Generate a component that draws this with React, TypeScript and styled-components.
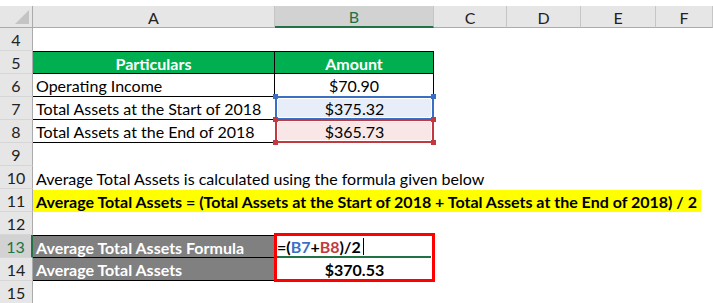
import React from 'react'
import styled, { createGlobalStyle } from 'styled-components'

const GREEN = '#217346'

const GlobalStyle = createGlobalStyle`
  html, body {
    margin: 0;
    padding: 0;
    background: #fff;
  }
  body {
    font-family: Lato, 'Open Sans', sans-serif;
  }
`

const Sheet = styled.div`
  display: grid;
  grid-template-columns: 33px 242px 159px 73px 74px 75px 1fr;
  grid-template-rows: 28px repeat(12, 23px);
  width: 713px;
  height: 303px;
  overflow: hidden;
  background: #fff;
  font-size: 16px;
  color: #000;
`

const Corner = styled.div`
  position: relative;
  margin-top: 6px;
  background: #e6e6e6;
  border-right: 1px solid #ababab;
  border-bottom: 1px solid #ababab;
  box-sizing: border-box;

  &::after {
    content: '';
    position: absolute;
    right: 3px;
    bottom: 3px;
    border-left: 14px solid transparent;
    border-bottom: 14px solid #c4c4c4;
  }
`

const ColHead = styled.div<{ $active?: boolean }>`
  margin-top: 6px;
  display: flex;
  align-items: center;
  justify-content: center;
  box-sizing: border-box;
  background: ${({ $active }) => ($active ? '#d2d2d2' : '#e6e6e6')};
  color: ${({ $active }) => ($active ? GREEN : '#222')};
  border-right: 1px solid #c6c6c6;
  border-bottom: ${({ $active }) => ($active ? `2px solid ${GREEN}` : '1px solid #ababab')};
  padding-top: 1px;
`

const RowHead = styled.div<{ $active?: boolean }>`
  display: flex;
  align-items: center;
  justify-content: center;
  box-sizing: border-box;
  background: ${({ $active }) => ($active ? '#d2d2d2' : '#e6e6e6')};
  color: ${({ $active }) => ($active ? GREEN : '#222')};
  border-bottom: 1px solid #d6d6d6;
  border-right: ${({ $active }) => ($active ? `2px solid ${GREEN}` : '1px solid #ababab')};
`

const Cell = styled.div<{
  $span?: number
  $fill?: string
  $ink?: string
  $bold?: boolean
  $center?: boolean
  $top?: boolean
  $bottom?: boolean
  $right?: boolean
}>`
  grid-column: span ${({ $span }) => $span ?? 1};
  display: flex;
  align-items: center;
  justify-content: ${({ $center }) => ($center ? 'center' : 'flex-start')};
  box-sizing: border-box;
  padding: 1px 3px 0;
  white-space: nowrap;
  background: ${({ $fill }) => $fill ?? 'transparent'};
  color: ${({ $ink }) => $ink ?? '#000'};
  font-weight: ${({ $bold }) => ($bold ? 700 : 400)};
  border-top: ${({ $top }) => ($top ? '1px solid #000' : '0')};
  border-bottom: ${({ $bottom }) => ($bottom ? '1px solid #000' : '0')};
  border-right: ${({ $right }) => ($right ? '1px solid #000' : '0')};
`

const TONES = {
  blue: { line: '#3b6fc4', fill: '#e7eef9' },
  red: { line: '#c23a40', fill: '#f9e7e7' },
}

const RefCell = styled.div<{ $tone: 'blue' | 'red' }>`
  position: relative;
  display: flex;
  align-items: center;
  justify-content: center;
  box-sizing: border-box;
  margin-top: -1px;
  padding-top: 1px;
  border: 2px solid ${({ $tone }) => TONES[$tone].line};
  box-shadow: inset 0 0 0 1px #fff;
  background: ${({ $tone }) => TONES[$tone].fill};
`

const Handle = styled.span<{ $tone: 'blue' | 'red'; $x: 'left' | 'right'; $y: 'top' | 'bottom' }>`
  position: absolute;
  width: 5px;
  height: 5px;
  background: ${({ $tone }) => TONES[$tone].line};
  ${({ $x }) => $x}: -4px;
  ${({ $y }) => $y}: -4px;
  z-index: 2;
`

const Highlight = styled.span`
  flex-shrink: 0;
  display: inline-block;
  margin-left: -3px;
  padding: 1px 4px 0 3px;
  line-height: 21px;
  background: #ffff00;
  font-weight: 700;
`

const Callout = styled.div`
  grid-column: 3;
  grid-row: span 2;
  margin: -2px -1px -1px -1px;
  display: grid;
  grid-template-rows: 1fr 1fr;
  border: 3px solid #ff0000;
  position: relative;
  z-index: 1;
  background: #fff;
  font-weight: 700;
`

const FormulaCell = styled.div`
  display: flex;
  align-items: center;
  box-sizing: border-box;
  padding-top: 1px;
  border-bottom: 2px solid ${GREEN};
  margin-right: 1px;
`

const Ref = styled.span<{ $tone: 'blue' | 'red' }>`
  color: ${({ $tone }) => TONES[$tone].line};
`

const Caret = styled.span`
  display: inline-block;
  width: 1px;
  height: 17px;
  margin-left: 2px;
  background: #000;
`

const ValueCell = styled.div`
  display: flex;
  align-items: center;
  justify-content: center;
  padding-top: 1px;
`

const columns = ['A', 'B', 'C', 'D', 'E', 'F']

function Range({ tone, children }: { tone: 'blue' | 'red'; children: React.ReactNode }) {
  return (
    <RefCell $tone={tone}>
      <Handle $tone={tone} $x="left" $y="top" />
      <Handle $tone={tone} $x="right" $y="top" />
      <Handle $tone={tone} $x="left" $y="bottom" />
      <Handle $tone={tone} $x="right" $y="bottom" />
      {children}
    </RefCell>
  )
}

export default function App() {
  return (
    <>
      <GlobalStyle />
      <Sheet>
        <Corner />
        {columns.map((c) => (
          <ColHead key={c} $active={c === 'B'}>
            {c}
          </ColHead>
        ))}

        <RowHead>4</RowHead>
        <Cell $span={6} />

        <RowHead>5</RowHead>
        <Cell $fill="#00b050" $ink="#fff" $bold $center $top $bottom $right>
          Particulars
        </Cell>
        <Cell $fill="#00b050" $ink="#fff" $bold $center $top $bottom $right>
          Amount
        </Cell>
        <Cell $span={4} />

        <RowHead>6</RowHead>
        <Cell $bottom $right>Operating Income</Cell>
        <Cell $center $bottom $right>$70.90</Cell>
        <Cell $span={4} />

        <RowHead>7</RowHead>
        <Cell $bottom>Total Assets at the Start of 2018</Cell>
        <Range tone="blue">$375.32</Range>
        <Cell $span={4} />

        <RowHead>8</RowHead>
        <Cell $bottom>Total Assets at the End of 2018</Cell>
        <Range tone="red">$365.73</Range>
        <Cell $span={4} />

        <RowHead>9</RowHead>
        <Cell $span={6} />

        <RowHead>10</RowHead>
        <Cell $span={6}>Average Total Assets is calculated using the formula given below</Cell>

        <RowHead>11</RowHead>
        <Cell $span={6}>
          <Highlight>
            Average Total Assets = (Total Assets at the Start of 2018 + Total Assets at the End of 2018) / 2
          </Highlight>
        </Cell>

        <RowHead>12</RowHead>
        <Cell $span={6} />

        <RowHead $active>13</RowHead>
        <Cell $fill="#808080" $ink="#fff" $bold $top $bottom $right>
          Average Total Assets Formula
        </Cell>
        <Callout>
          <FormulaCell>
            =(<Ref $tone="blue">B7</Ref>+<Ref $tone="red">B8</Ref>)/2
            <Caret />
          </FormulaCell>
          <ValueCell>$370.53</ValueCell>
        </Callout>
        <Cell $span={4} />

        <RowHead>14</RowHead>
        <Cell $fill="#808080" $ink="#fff" $bold $bottom $right>
          Average Total Assets
        </Cell>
        <Cell $span={4} />

        <RowHead>15</RowHead>
        <Cell $span={6} />
      </Sheet>
    </>
  )
}
